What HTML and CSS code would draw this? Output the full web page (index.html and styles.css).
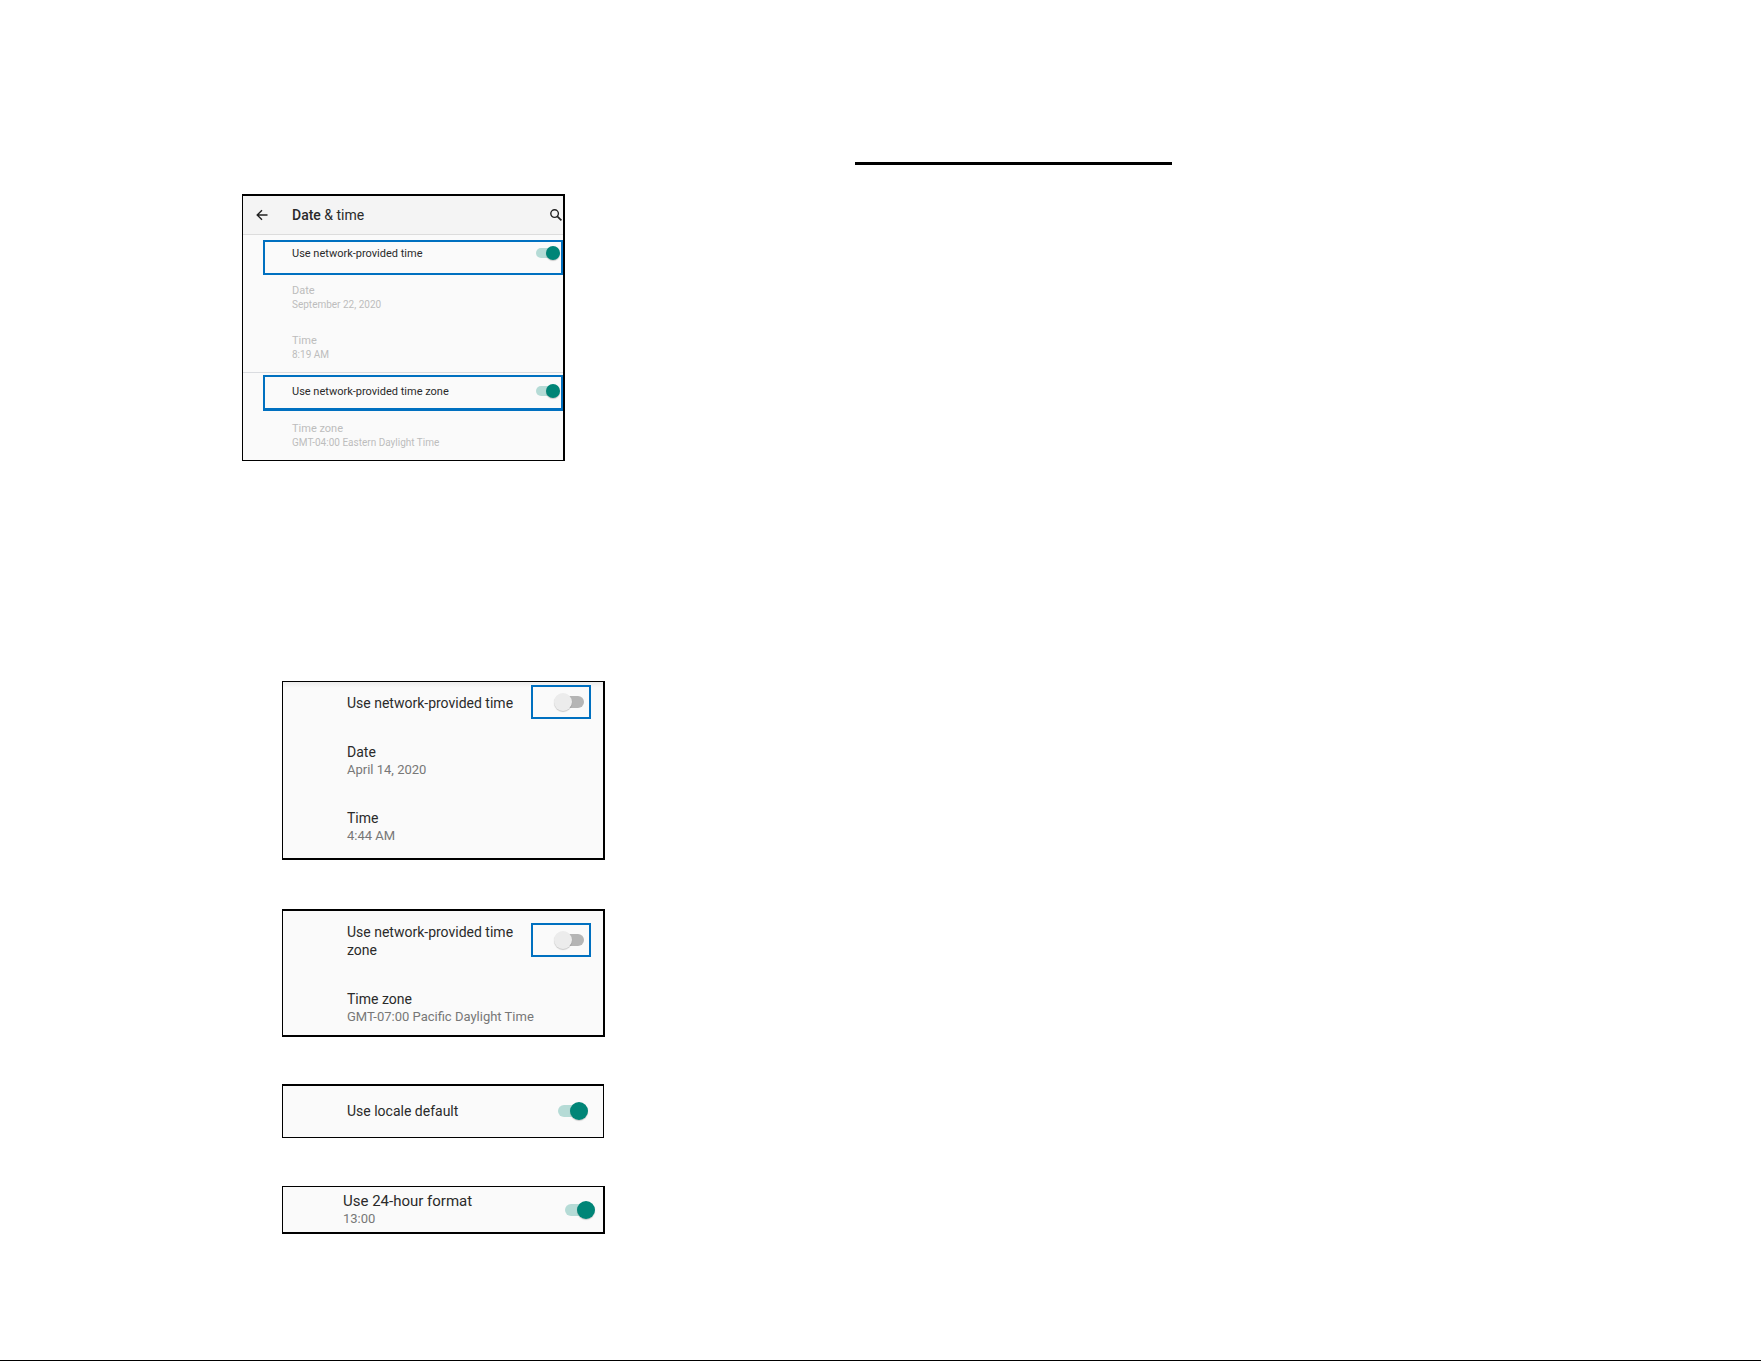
FILE: index.html
```
<!DOCTYPE html>
<html lang="en">
<head>
  <meta charset="UTF-8">
  <meta name="viewport" content="width=device-width, initial-scale=1.0">
  <title>Date &amp; time</title>
  <link rel="stylesheet" href="styles.css">
</head>
<body>
  <hr class="rule">
  <main class="panels">
    <section class="panel overview">
      <header class="toolbar">
        <button class="icon-btn" aria-label="Back">
          <svg width="12" height="12" viewBox="0 0 12 12"><path d="M11.5 6H1.2M6 1.2L1.2 6L6 10.8" fill="none" stroke="#222" stroke-width="1.4"/></svg>
        </button>
        <h1><b>Date</b> &amp; time</h1>
        <button class="icon-btn" aria-label="Search">
          <svg width="12" height="12" viewBox="0 0 12 12"><circle cx="4.6" cy="4.6" r="3.8" fill="none" stroke="#222" stroke-width="1.4"/><path d="M7.3 7.3L11.4 11.4" stroke="#222" stroke-width="1.7"/></svg>
        </button>
      </header>
      <div class="row marked">
        <label for="net-time">Use network-provided time</label>
        <input type="checkbox" class="switch" id="net-time" checked>
      </div>
      <div class="item">
        <h2>Date</h2>
        <p>September 22, 2020</p>
      </div>
      <div class="item">
        <h2>Time</h2>
        <p>8:19 AM</p>
      </div>
      <div class="row marked zone">
        <label for="net-zone">Use network-provided time zone</label>
        <input type="checkbox" class="switch" id="net-zone" checked>
      </div>
      <div class="item">
        <h2>Time zone</h2>
        <p>GMT-04:00 Eastern Daylight Time</p>
      </div>
    </section>

    <section class="panel detail manual-time">
      <div class="row">
        <label for="manual-time">Use network-provided time</label>
        <span class="mark"><input type="checkbox" class="switch" id="manual-time"></span>
      </div>
      <div class="item">
        <h2>Date</h2>
        <p>April 14, 2020</p>
      </div>
      <div class="item">
        <h2>Time</h2>
        <p>4:44 AM</p>
      </div>
    </section>

    <section class="panel detail manual-zone">
      <div class="row">
        <label for="manual-zone">Use network-provided time zone</label>
        <span class="mark"><input type="checkbox" class="switch" id="manual-zone"></span>
      </div>
      <div class="item">
        <h2>Time zone</h2>
        <p>GMT-07:00 Pacific Daylight Time</p>
      </div>
    </section>

    <section class="panel detail locale">
      <div class="row">
        <label for="locale">Use locale default</label>
        <input type="checkbox" class="switch" id="locale" checked>
      </div>
    </section>

    <section class="panel detail format">
      <div class="row">
        <label for="format">Use 24-hour format <small>13:00</small></label>
        <input type="checkbox" class="switch" id="format" checked>
      </div>
    </section>
  </main>
</body>
</html>
```
FILE: styles.css
```
* {
  box-sizing: border-box;
}
body {
  margin: 0;
  min-height: 100vh;
  padding-top: 162px;
  background-color: #fff;
  border-bottom: 1px solid #000;
  color: #2a2a2a;
  font-family: Roboto, sans-serif;
}
h1, h2, p {
  margin: 0;
  font-weight: normal;
}
.rule {
  width: 18%;
  height: 3px;
  margin: 0 0 29px 855px;
  border: none;
  background-color: #000;
}
.panels {
  display: flex;
  flex-direction: column;
  gap: 48px;
  padding: 0 20px 0 282px;
}
.panel {
  width: 100%;
  max-width: 323px;
  border: 2px solid #000;
  border-left-width: 1px;
  background-color: #fafafa;
}
.row {
  display: flex;
  align-items: center;
  justify-content: space-between;
}

/* switches */
.switch {
  appearance: none;
  position: relative;
  flex: none;
  width: 30px;
  height: 18px;
  margin: 0;
  cursor: pointer;
}
.switch::before {
  content: "";
  position: absolute;
  top: 3px;
  left: 6px;
  right: 0;
  height: 12px;
  border-radius: 6px;
  background-color: #b5b5b5;
}
.switch::after {
  content: "";
  position: absolute;
  top: 0;
  left: 0;
  width: 18px;
  height: 18px;
  border-radius: 50%;
  background-color: #ececec;
  box-shadow: 0 1px 1px rgba(0, 0, 0, 0.2);
}
.switch:checked::before {
  left: 0;
  right: 6px;
  background-color: #b5dbd6;
}
.switch:checked::after {
  left: auto;
  right: 0;
  background-color: #008577;
}

/* first panel, small type */
.overview {
  margin-left: -40px;
  margin-bottom: 172px;
  padding-bottom: 10px;
  border-bottom-width: 1px;
}
.toolbar {
  display: flex;
  align-items: center;
  height: 39px;
  padding: 0 1px 0 13px;
  background-color: #f4f4f4;
  border-bottom: 1px solid #dcdcdc;
}
.toolbar h1 {
  flex: 1;
  padding-left: 24px;
  font-size: 14px;
  line-height: 18px;
}
.toolbar b {
  font-weight: 500;
}
.icon-btn {
  display: flex;
  padding: 0;
  border: none;
  background: none;
  cursor: pointer;
}
.marked {
  align-items: flex-start;
  margin: 5px 0 0 20px;
  padding: 4px 1px 11px 27px;
  border: 2px solid #0070c0;
  font-size: 11px;
  line-height: 16px;
}
.overview .item {
  padding: 9px 0 0 49px;
  color: #bdbdbd;
}
.overview .item + .item {
  padding-top: 22px;
  padding-bottom: 10px;
  border-bottom: 1px solid #dadce0;
}
.overview .item h2 {
  font-size: 11px;
  line-height: 14px;
}
.overview .item p {
  font-size: 10px;
  line-height: 14px;
}
.marked.zone {
  margin-top: 2px;
  padding-top: 7px;
  padding-bottom: 8px;
  border-bottom-width: 3px;
}
.overview .zone + .item {
  padding-top: 11px;
}
.overview .switch {
  width: 24px;
  height: 14px;
}
.overview .switch::before {
  top: 2px;
  height: 10px;
}
.overview .switch::after {
  width: 14px;
  height: 14px;
}

/* larger panels */
.detail {
  padding-left: 64px;
}
.detail label, .detail h2 {
  font-size: 14px;
  line-height: 18px;
}
.detail p, .detail small {
  display: block;
  color: #777;
  font-size: 13px;
  line-height: 18px;
}
.mark {
  display: flex;
  margin-right: 12px;
  padding: 6px 5px 6px 21px;
  border: 2px solid #0070c0;
}
.manual-time label, .manual-zone label {
  padding-top: 2px;
}
.manual-time {
  padding-top: 3px;
  padding-bottom: 13px;
  border-top-width: 1px;
  background-image: linear-gradient(#ececec, #fafafa 6px);
}
.manual-time .item {
  padding-top: 24px;
}
.manual-time .item + .item {
  padding-top: 30px;
}
.manual-zone {
  margin-top: 1px;
  padding-top: 10px;
  padding-bottom: 9px;
}
.manual-zone .item {
  padding-top: 31px;
}
.locale {
  max-width: 322px;
  margin-top: -1px;
  padding: 16px 15px 17px 64px;
  border-right-width: 1px;
  border-bottom-width: 1px;
}
.format {
  padding: 5px 8px 4px 60px;
  border-top-width: 1px;
}
.format label {
  font-size: 15px;
}
```
